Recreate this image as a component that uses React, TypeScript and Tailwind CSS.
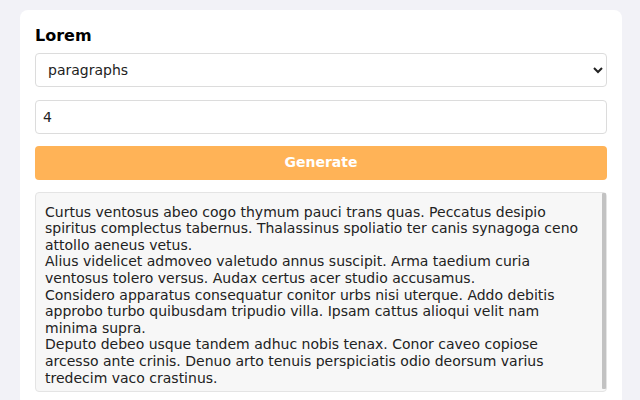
import { useState } from "react";

const paragraphs = [
  "Curtus ventosus abeo cogo thymum pauci trans quas. Peccatus desipio spiritus complectus tabernus. Thalassinus spoliatio ter canis synagoga ceno attollo aeneus vetus.",
  "Alius videlicet admoveo valetudo annus suscipit. Arma taedium curia ventosus tolero versus. Audax certus acer studio accusamus.",
  "Considero apparatus consequatur conitor urbs nisi uterque. Addo debitis approbo turbo quibusdam tripudio villa. Ipsam cattus alioqui velit nam minima supra.",
  "Deputo debeo usque tandem adhuc nobis tenax. Conor caveo copiose arcesso ante crinis. Denuo arto tenuis perspiciatis odio deorsum varius tredecim vaco crastinus.",
];

export default function App() {
  const [unit, setUnit] = useState("paragraphs");
  const [count, setCount] = useState("4");

  return (
    <div className="min-h-screen bg-[#f2f2f7] pl-5 pt-[10px] font-['DejaVu_Sans',sans-serif] text-[#222]">
      <div className="w-[602px] rounded-lg bg-white px-[15px] pb-[15px] pt-[17px]">
        <h1 className="mb-[7px] text-[16px] font-bold leading-[18.6px] text-black">Lorem</h1>

        <select
          value={unit}
          onChange={(e) => setUnit(e.target.value)}
          className="block h-[34px] w-full rounded border border-[#dcdcdc] bg-white px-2 text-[14px]"
        >
          <option value="paragraphs">paragraphs</option>
          <option value="sentences">sentences</option>
          <option value="words">words</option>
        </select>

        <input
          value={count}
          onChange={(e) => setCount(e.target.value)}
          className="mt-[13px] block h-[34px] w-full rounded border border-[#dcdcdc] bg-white px-[7px] text-[14px]"
        />

        <button className="mt-3 block h-[34px] w-full rounded bg-[#ffb357] text-[14px] font-bold text-white">
          Generate
        </button>

        <div className="mt-3 flex h-[200px] rounded border border-[#e4e4e4] bg-[#f7f7f7]">
          <div className="flex-1 overflow-hidden px-[9px] pb-[9px] pt-[11px] text-[14px] leading-[16.6px]">
            {paragraphs.map((p) => (
              <div key={p}>{p}</div>
            ))}
          </div>
          <div className="mb-[2px] w-1 rounded-[1px] bg-[#c2c2c2]" />
        </div>
      </div>
    </div>
  );
}
